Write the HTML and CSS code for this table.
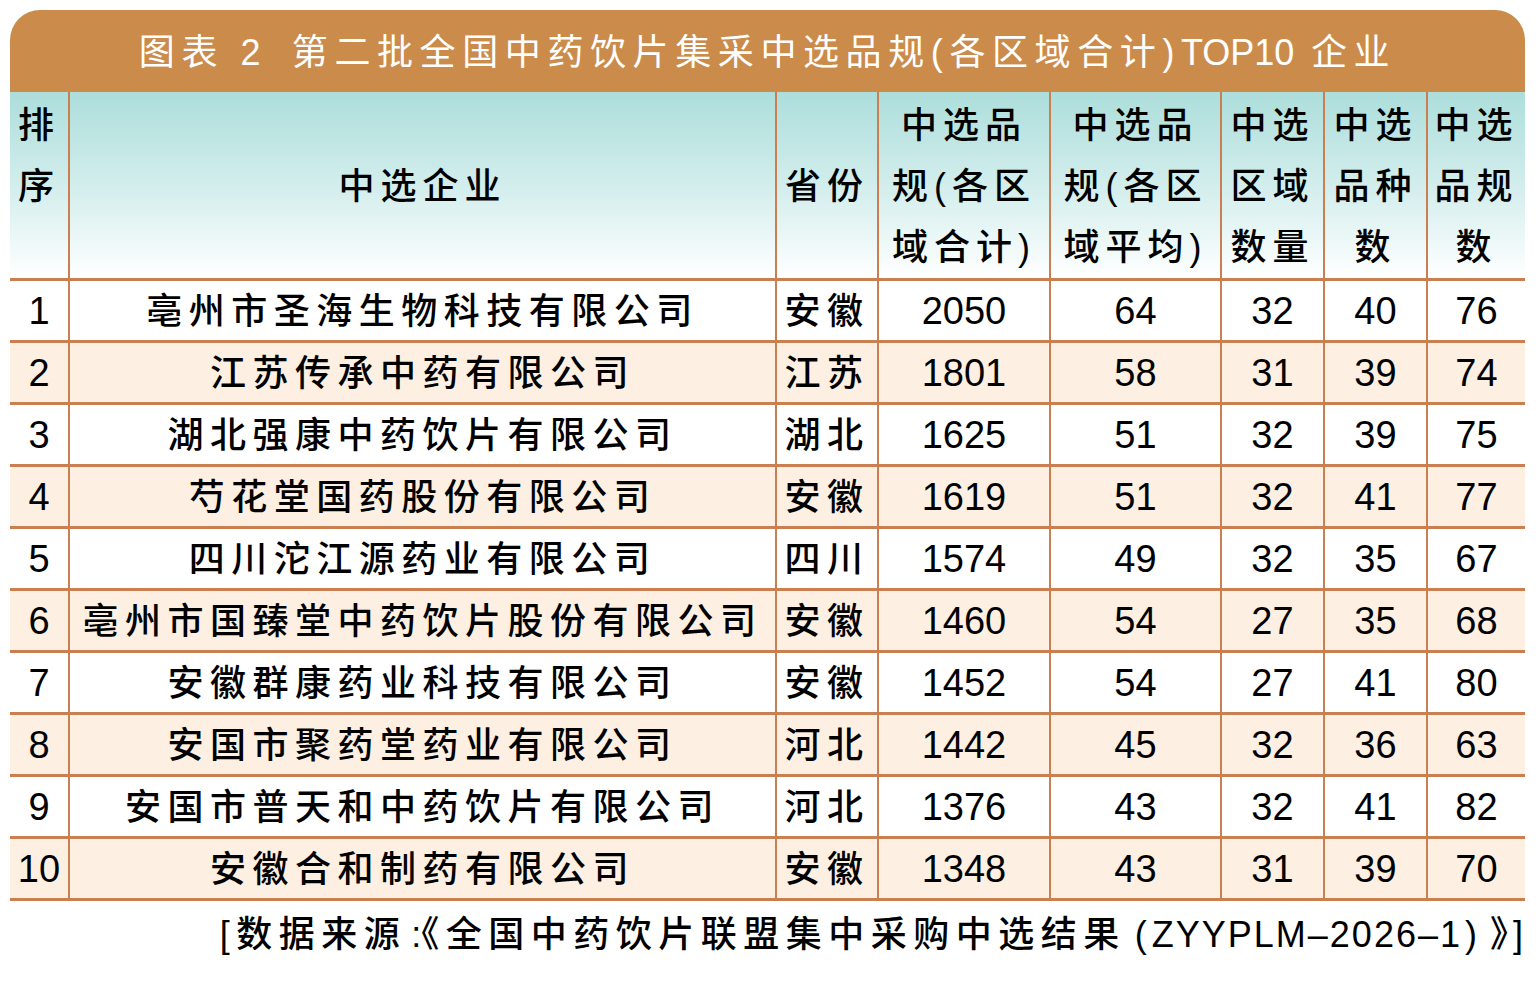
FILE: index.html
```html
<!DOCTYPE html>
<html lang="zh-CN">
<head>
<meta charset="utf-8">
<title>图表 2 第二批全国中药饮片集采中选品规TOP10企业</title>
<link rel="stylesheet" href="styles.css">
</head>
<body>
<div class="figure">
  <div class="title">图表 2&ensp;第二批全国中药饮片集采中选品规(各区域合计)<span class="lat">TOP10</span> 企业</div>
  <table class="grid">
    <colgroup>
      <col class="c-rank"><col class="c-name"><col class="c-prov"><col class="c-total"><col class="c-avg"><col class="c-reg"><col class="c-var"><col class="c-spec">
    </colgroup>
    <thead>
      <tr>
        <th class="top">排<br>序</th>
        <th>中选企业</th>
        <th>省份</th>
        <th>中选品<br>规(各区<br>域合计)</th>
        <th>中选品<br>规(各区<br>域平均)</th>
        <th>中选<br>区域<br>数量</th>
        <th>中选<br>品种<br>数</th>
        <th>中选<br>品规<br>数</th>
      </tr>
    </thead>
    <tbody>
      <tr><td class="num">1</td><td class="cn">亳州市圣海生物科技有限公司</td><td class="cn">安徽</td><td class="num">2050</td><td class="num">64</td><td class="num">32</td><td class="num">40</td><td class="num">76</td></tr>
      <tr class="alt"><td class="num">2</td><td class="cn">江苏传承中药有限公司</td><td class="cn">江苏</td><td class="num">1801</td><td class="num">58</td><td class="num">31</td><td class="num">39</td><td class="num">74</td></tr>
      <tr><td class="num">3</td><td class="cn">湖北强康中药饮片有限公司</td><td class="cn">湖北</td><td class="num">1625</td><td class="num">51</td><td class="num">32</td><td class="num">39</td><td class="num">75</td></tr>
      <tr class="alt"><td class="num">4</td><td class="cn">芍花堂国药股份有限公司</td><td class="cn">安徽</td><td class="num">1619</td><td class="num">51</td><td class="num">32</td><td class="num">41</td><td class="num">77</td></tr>
      <tr><td class="num">5</td><td class="cn">四川沱江源药业有限公司</td><td class="cn">四川</td><td class="num">1574</td><td class="num">49</td><td class="num">32</td><td class="num">35</td><td class="num">67</td></tr>
      <tr class="alt"><td class="num">6</td><td class="cn">亳州市国臻堂中药饮片股份有限公司</td><td class="cn">安徽</td><td class="num">1460</td><td class="num">54</td><td class="num">27</td><td class="num">35</td><td class="num">68</td></tr>
      <tr><td class="num">7</td><td class="cn">安徽群康药业科技有限公司</td><td class="cn">安徽</td><td class="num">1452</td><td class="num">54</td><td class="num">27</td><td class="num">41</td><td class="num">80</td></tr>
      <tr class="alt"><td class="num">8</td><td class="cn">安国市聚药堂药业有限公司</td><td class="cn">河北</td><td class="num">1442</td><td class="num">45</td><td class="num">32</td><td class="num">36</td><td class="num">63</td></tr>
      <tr><td class="num">9</td><td class="cn">安国市普天和中药饮片有限公司</td><td class="cn">河北</td><td class="num">1376</td><td class="num">43</td><td class="num">32</td><td class="num">41</td><td class="num">82</td></tr>
      <tr class="alt"><td class="num">10</td><td class="cn">安徽合和制药有限公司</td><td class="cn">安徽</td><td class="num">1348</td><td class="num">43</td><td class="num">31</td><td class="num">39</td><td class="num">70</td></tr>
    </tbody>
  </table>
  <div class="source">[数据来源<span class="colon">:</span><span class="ql">《</span>全国中药饮片联盟集中采购中选结果<span class="pl">(</span><span class="code">ZYYPLM–2026–1</span><span class="pr">)</span><span class="qr">》</span><span class="end">]</span></div>
</div>
</body>
</html>
```

FILE: styles.css
```css
html, body {
  margin: 0;
  padding: 0;
  background: #ffffff;
}

body {
  font-family: "Liberation Sans", "Noto Sans CJK SC", sans-serif;
  color: #000000;
}

.figure {
  width: 1515px;
  margin: 10px 0 0 10px;
}

.title {
  height: 82px;
  padding-top: 3px;
  box-sizing: border-box;
  line-height: 79px;
  background: #cb8b4b;
  border-radius: 30px 30px 0 0;
  color: #ffffff;
  font-size: 36px;
  letter-spacing: 6.6px;
  text-align: center;
  white-space: nowrap;
}

.lat {
  letter-spacing: 0;
}

.grid {
  width: 1515px;
  table-layout: fixed;
  border-collapse: collapse;
}

.c-rank { width: 59px; }
.c-name { width: 707px; }
.c-prov { width: 102px; }
.c-total { width: 172px; }
.c-avg { width: 171px; }
.c-reg { width: 103px; }
.c-var { width: 103px; }
.c-spec { width: 98px; }

.grid th,
.grid td {
  padding: 0;
  border: 3px solid #c97f50;
  border-top: none;
  text-align: center;
  white-space: nowrap;
  overflow: hidden;
}

.grid th {
  height: 180px;
  padding-top: 3px;
  background: linear-gradient(to bottom, #acdedb 0%, #d6efee 55%, #ffffff 100%);
  font-size: 36px;
  font-weight: 500;
  line-height: 61px;
  letter-spacing: 6px;
  vertical-align: middle;
  border-left-width: 2px;
  border-right-width: 2px;
}

.grid th.top {
  vertical-align: top;
}

.grid th:first-child,
.grid td:first-child {
  border-left: none;
}

.grid th:last-child,
.grid td:last-child {
  border-right: none;
}

.grid td {
  line-height: 57px;
  padding-top: 2px;
  border-left-width: 2px;
  border-right-width: 2px;
}

.grid td.num {
  font-size: 38px;
}

.grid td.cn {
  font-size: 36px;
  font-weight: 500;
  letter-spacing: 6.5px;
}

.grid tr.alt td {
  background: #fdf0e3;
}

.source {
  margin-top: 12px;
  padding-right: 2px;
  text-align: right;
  font-size: 36px;
  font-weight: 500;
  line-height: 44px;
  letter-spacing: 6.5px;
  white-space: nowrap;
}

.source .colon {
  letter-spacing: 0;
  margin-left: 5px;
}

.source .ql,
.source .qr {
  font-feature-settings: "halt" 1;
}

.source .qr {
  letter-spacing: 0;
  margin-right: 5px;
}

.source .pl {
  letter-spacing: 0;
  margin: 0 5px 0 9px;
}

.source .pr {
  letter-spacing: 0;
  margin: 0 13px 0 3px;
}

.source .code {
  letter-spacing: 2px;
}

.source .end {
  letter-spacing: 0;
}
```
